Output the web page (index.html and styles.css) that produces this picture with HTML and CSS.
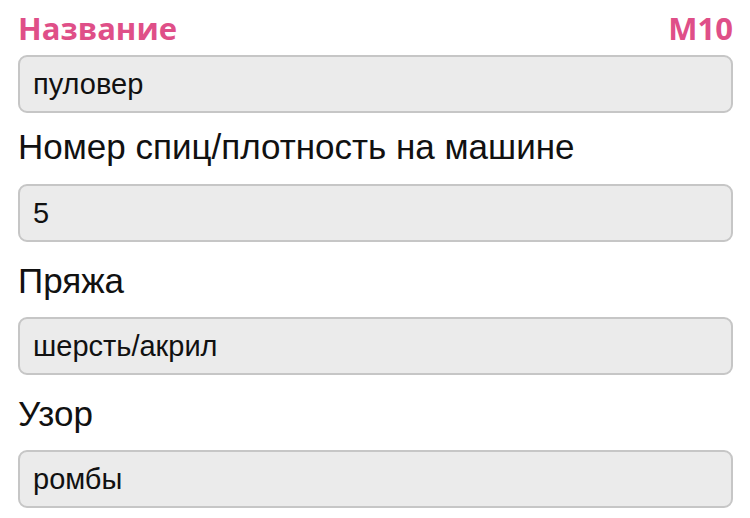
FILE: index.html
```html
<!DOCTYPE html>
<html lang="ru">
<head>
    <meta charset="UTF-8">
    <title>Изделие</title>
    <link rel="stylesheet" href="styles.css">
</head>
<body>
<div class="form">
    <div class="head">
        <span class="title">Название</span>
        <span class="code">M10</span>
    </div>
    <div class="field">пуловер</div>

    <div class="label label-first">Номер спиц/плотность на машине</div>
    <div class="field">5</div>

    <div class="label">Пряжа</div>
    <div class="field">шерсть/акрил</div>

    <div class="label">Узор</div>
    <div class="field">ромбы</div>
</div>
</body>
</html>
```

FILE: styles.css
```css
body {
    margin: 0;
    background-color: #ffffff;
    font-family: "Liberation Sans", Arial, sans-serif;
    color: #111111;
}
.form {
    padding: 9px 17px 0 18px;
}
.head {
    display: flex;
    justify-content: space-between;
    height: 38px;
    line-height: 38px;
    margin-bottom: 8px;
}
.title, .code {
    color: #df4f88;
    font-family: "Open Sans", "Liberation Sans", sans-serif;
    font-weight: bold;
    font-size: 31px;
}
.field {
    box-sizing: border-box;
    height: 58px;
    padding: 0 13px;
    display: flex;
    align-items: center;
    background-color: #ebebeb;
    border: 2px solid #c6c6c6;
    border-radius: 9px;
    font-size: 29px;
}
.label {
    font-size: 35px;
    line-height: 40px;
    padding-top: 19px;
    margin-bottom: 16px;
}
.label-first {
    padding-top: 14px;
    margin-bottom: 17px;
}
```
